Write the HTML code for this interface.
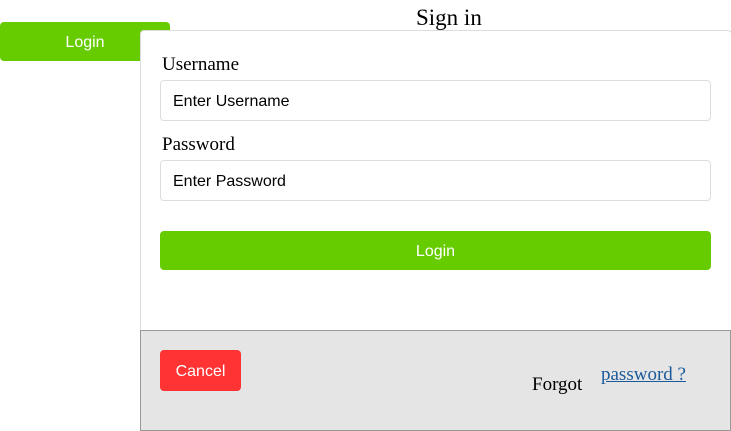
<!DOCTYPE html>
<html><head><style>
body{margin:0;width:731px;height:431px;position:relative;background:#fff;font-family:"Liberation Serif",serif;overflow:hidden}
.abs{position:absolute}
.btn{background:#66cc00;color:#fff;font-family:"Liberation Sans",sans-serif;font-size:16px;text-align:center;border-radius:4px}
.inp{position:absolute;left:160px;border:1px solid #ddd;border-radius:4px;font-family:"Liberation Sans",sans-serif;font-size:16px;line-height:42px;padding-left:12px;box-sizing:border-box;width:551px;height:41px}
.lbl{position:absolute;left:162px;font-size:19px}
</style></head><body>
<div class="abs btn" style="left:0;top:22px;width:170px;height:39px;line-height:42px">Login</div>
<div class="abs" style="left:416px;top:5px;font-size:23px">Sign in</div>
<div class="abs" style="left:140px;top:30px;width:590px;height:300px;border:1px solid #ddd;border-bottom:none;border-radius:4px 4px 0 0;background:#fff"></div>
<div class="lbl" style="top:54px">Username</div>
<div class="inp" style="top:80px">Enter Username</div>
<div class="lbl" style="top:134px">Password</div>
<div class="inp" style="top:160px">Enter Password</div>
<div class="abs btn" style="left:160px;top:231px;width:551px;height:39px;line-height:42px">Login</div>
<div class="abs" style="left:140px;top:330px;width:589px;height:99px;border:1px solid #999;background:#e5e5e5"></div>
<div class="abs btn" style="left:160px;top:350px;width:81px;height:41px;line-height:44px;background:#ff3333">Cancel</div>
<div class="abs" style="left:532px;top:374px;font-size:19px">Forgot</div>
<div class="abs" style="left:601px;top:364px;font-size:19px;color:#1a5a9a;text-decoration:underline">password ?</div>
</body></html>
